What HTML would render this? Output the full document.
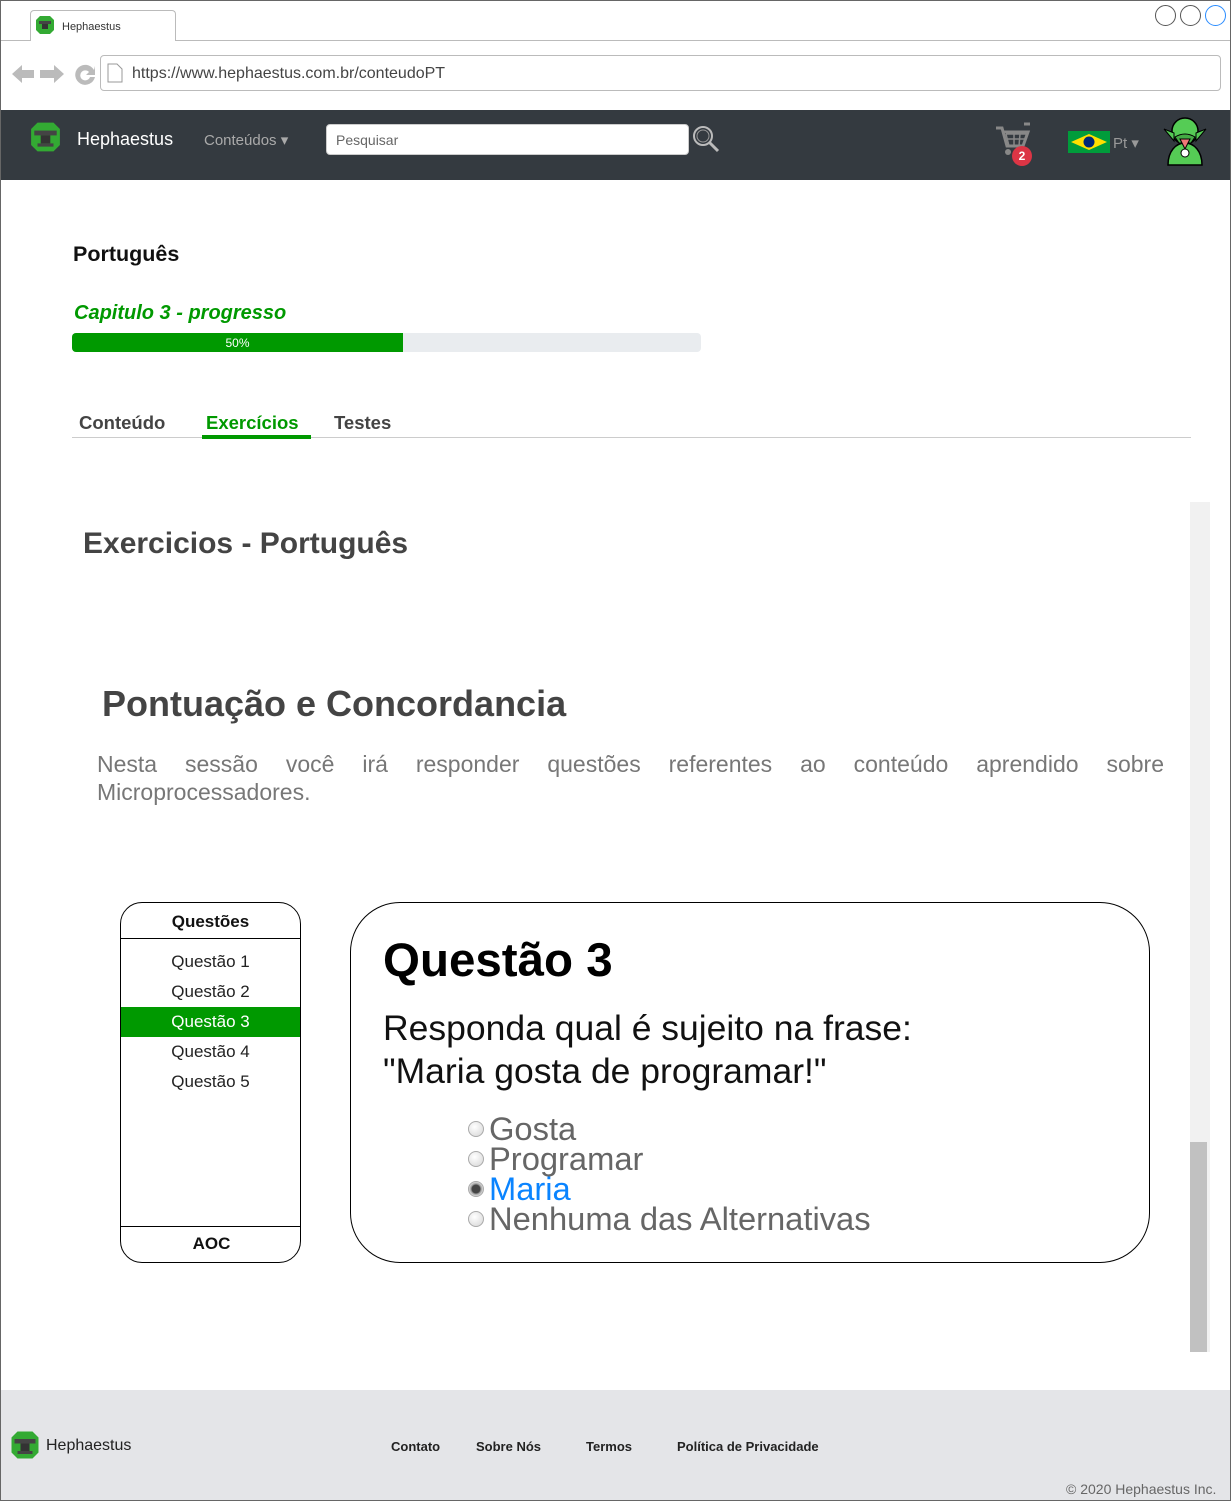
<!DOCTYPE html>
<html><head><meta charset="utf-8"><style>
*{margin:0;padding:0;box-sizing:border-box}
body{width:1231px;height:1501px;position:relative;overflow:hidden;font-family:"Liberation Sans",Arial,sans-serif;background:#fff}
.a{position:absolute;white-space:nowrap}
.frame{position:absolute;left:0;top:0;width:1231px;height:1501px;border:1px solid #666;pointer-events:none;z-index:10}
.rad{position:absolute;width:16px;height:16px;border-radius:50%;border:1px solid #aaa;background:radial-gradient(circle at 40% 35%,#fff,#d5d5d5)}
</style></head><body>
<div class="a" style="left:0;top:40px;width:1231px;height:1px;background:#bbb"></div>
<div class="a" style="left:30px;top:10px;width:146px;height:31px;border:1px solid #bbb;border-bottom:none;border-radius:4px 4px 0 0;background:#fff"></div>
<svg class="a" style="left:35px;top:15px" width="20" height="20" viewBox="0 0 20 20"><path d="M5 1h10l4 4v10l-4 4H5l-4-4V5z" fill="#33aa33"/><rect x="4" y="6" width="12" height="3" fill="#444"/><rect x="7" y="9" width="6" height="5" fill="#333"/></svg>
<div class="a" style="left:62px;top:21px;font-size:11px;color:#333">Hephaestus</div>
<div class="a" style="left:1155px;top:5px;width:21px;height:21px;border:1px solid #555;border-radius:50%"></div>
<div class="a" style="left:1180px;top:5px;width:21px;height:21px;border:1px solid #555;border-radius:50%"></div>
<div class="a" style="left:1205px;top:5px;width:21px;height:21px;border:1px solid #2a8cff;border-radius:50%"></div>
<svg class="a" style="left:10px;top:62px" width="88" height="24" viewBox="0 0 88 24"><path d="M2 12l10-9v5h12v8H12v5z" fill="#bbb"/><path d="M54 12L44 3v5H30v8h14v5z" fill="#bbb"/><path d="M84 8a10 10 0 1 0 1 7h-5a5 5 0 1 1-1-5l-3 3h9V4z" fill="#bbb"/></svg>
<div class="a" style="left:100px;top:55px;width:1121px;height:36px;border:1px solid #bbb;border-radius:4px"></div>
<svg class="a" style="left:106px;top:63px" width="18" height="20"><path d="M2 1h9l5 5v13H2z" fill="none" stroke="#999"/></svg>
<div class="a" style="left:132px;top:65px;font-size:16px;color:#444">https://www.hephaestus.com.br/conteudoPT</div>
<div class="a" style="left:0;top:110px;width:1231px;height:70px;background:#343a40"></div>
<svg class="a" style="left:29px;top:121px" width="33" height="32" viewBox="0 0 20 20"><path d="M5 1h10l4 4v10l-4 4H5l-4-4V5z" fill="#33aa33"/><rect x="3" y="6" width="14" height="3" fill="#444"/><rect x="7" y="9" width="6" height="5" fill="#333"/><rect x="5" y="14" width="10" height="2" fill="#444"/></svg>
<div class="a" style="left:77px;top:129px;font-size:18px;color:#fff">Hephaestus</div>
<div class="a" style="left:204px;top:131px;font-size:15px;color:#aaa">Conteúdos ▾</div>
<div class="a" style="left:326px;top:124px;width:363px;height:31px;background:#fff;border-radius:4px;border:1px solid #ccc"></div>
<div class="a" style="left:336px;top:132px;font-size:14px;color:#666">Pesquisar</div>
<svg class="a" style="left:691px;top:124px" width="30" height="30"><circle cx="12" cy="12" r="9" fill="none" stroke="#bbb" stroke-width="2"/><circle cx="12" cy="12" r="6" fill="none" stroke="#999"/><path d="M18 18l9 9" stroke="#bbb" stroke-width="3"/></svg>
<svg class="a" style="left:994px;top:122px" width="40" height="40" viewBox="0 0 40 40"><path d="M2 6h6l5 18h16l5-14H10" fill="none" stroke="#888" stroke-width="3"/><path d="M12 12h20M13 17h18M12 12l3 12M20 12v12M26 12l-1 12" stroke="#888" stroke-width="1.5"/><circle cx="14" cy="30" r="3" fill="#888"/><path d="M30 2l6 0" stroke="#888" stroke-width="3"/></svg>
<div class="a" style="left:1012px;top:146px;width:20px;height:20px;border-radius:50%;background:#dc3545;color:#fff;font-size:12px;font-weight:bold;text-align:center;line-height:20px">2</div>
<svg class="a" style="left:1068px;top:131px" width="42" height="22"><rect width="42" height="22" fill="#009c3b"/><path d="M21 3L39 11 21 19 3 11z" fill="#ffdf00"/><circle cx="21" cy="11" r="5.5" fill="#002776"/></svg>
<div class="a" style="left:1113px;top:134px;font-size:15px;color:#999">Pt ▾</div>
<svg class="a" style="left:1162px;top:115px" width="46" height="52" viewBox="0 0 46 52"><ellipse cx="23" cy="16" rx="13" ry="13" fill="#5c5" stroke="#000" stroke-width="1.5"/><path d="M2 14l10 4 0 8zM44 14l-10 4 0 8z" fill="#5c5" stroke="#000"/><path d="M6 50c0-14 8-22 17-22s17 8 17 22z" fill="#5c5" stroke="#000" stroke-width="1.5"/><path d="M13 22q10 -6 20 0l-4 6h-12z" fill="#4a4" stroke="#000"/><path d="M18 24l5 10 5-10z" fill="#e77" stroke="#000"/><circle cx="23" cy="38" r="4" fill="#fff" stroke="#000"/></svg>
<div class="a" style="left:73px;top:242px;font-size:21.5px;font-weight:bold;color:#111">Português</div>
<div class="a" style="left:74px;top:302px;font-size:20px;font-weight:bold;font-style:italic;color:#009900">Capitulo 3 - progresso</div>
<div class="a" style="left:72px;top:333px;width:629px;height:19px;background:#e9ecef;border-radius:4px;overflow:hidden"><div style="width:331px;height:19px;background:#009900;color:#fff;font-size:12px;text-align:center;line-height:20px">50%</div></div>
<div class="a" style="left:79px;top:412px;font-size:18.5px;font-weight:bold;color:#444">Conteúdo</div>
<div class="a" style="left:206px;top:412px;font-size:18.5px;font-weight:bold;color:#009900">Exercícios</div>
<div class="a" style="left:334px;top:412px;font-size:18.5px;font-weight:bold;color:#444">Testes</div>
<div class="a" style="left:72px;top:437px;width:1119px;height:1px;background:#ccc"></div>
<div class="a" style="left:202px;top:435px;width:109px;height:4px;background:#009900"></div>
<div class="a" style="left:1190px;top:502px;width:20px;height:850px;background:#f1f1f1"></div>
<div class="a" style="left:1190px;top:1142px;width:17px;height:210px;background:#c1c1c1"></div>
<div class="a" style="left:83px;top:527px;font-size:30px;font-weight:bold;color:#444">Exercicios - Português</div>
<div class="a" style="left:102px;top:683px;font-size:36px;font-weight:bold;color:#444">Pontuação e Concordancia</div>
<div class="a" style="left:97px;top:750px;width:1067px;font-size:23px;color:#777;white-space:normal;text-align:justify;text-align-last:left;line-height:28px">Nesta sessão você irá responder questões referentes ao conteúdo aprendido sobre Microprocessadores.</div>
<div class="a" style="left:120px;top:902px;width:181px;height:361px;border:1px solid #000;border-radius:22px;overflow:hidden">
<div style="height:36px;border-bottom:1px solid #000;text-align:center;font-size:17px;font-weight:bold;line-height:38px;color:#111">Questões</div>
<div style="text-align:center;font-size:17px;color:#222;line-height:30px;padding-top:8px">Questão 1<br>Questão 2<br><div style="background:#009900;color:#fff">Questão 3</div>Questão 4<br>Questão 5</div>
<div style="position:absolute;left:0;top:323px;width:181px;height:36px;border-top:1px solid #000;text-align:center;font-size:17px;font-weight:bold;line-height:34px;color:#111">AOC</div>
</div>
<div class="a" style="left:350px;top:902px;width:800px;height:361px;border:1px solid #000;border-radius:50px"></div>
<div class="a" style="left:383px;top:933px;font-size:47.5px;font-weight:bold;color:#000">Questão 3</div>
<div class="a" style="left:383px;top:1007px;font-size:35.5px;color:#111;line-height:43px">Responda qual é sujeito na frase:<br>"Maria gosta de programar!"</div>
<div class="rad" style="left:468px;top:1121px"></div>
<div class="rad" style="left:468px;top:1151px"></div>
<div class="rad" style="left:468px;top:1181px;background:radial-gradient(circle,#444 0 4px,#999 5px,#ddd 7px)"></div>
<div class="rad" style="left:468px;top:1211px"></div>
<div class="a" style="left:489px;top:1114px;font-size:32.7px;color:#666;line-height:30px">Gosta<br>Programar<br><span style="color:#0a84ff">Maria</span><br>Nenhuma das Alternativas</div>
<div class="a" style="left:0;top:1390px;width:1231px;height:111px;background:#e4e5e8"></div>
<svg class="a" style="left:10px;top:1430px" width="30" height="30" viewBox="0 0 20 20"><path d="M5 1h10l4 4v10l-4 4H5l-4-4V5z" fill="#33aa33"/><rect x="3" y="6" width="14" height="3" fill="#444"/><rect x="7" y="9" width="6" height="5" fill="#333"/><rect x="5" y="14" width="10" height="2" fill="#444"/></svg>
<div class="a" style="left:46px;top:1437px;font-size:16px;color:#222">Hephaestus</div>
<div class="a" style="left:391px;top:1439px;font-size:13px;font-weight:bold;color:#222">Contato</div>
<div class="a" style="left:476px;top:1439px;font-size:13px;font-weight:bold;color:#222">Sobre Nós</div>
<div class="a" style="left:586px;top:1439px;font-size:13px;font-weight:bold;color:#222">Termos</div>
<div class="a" style="left:677px;top:1439px;font-size:13px;font-weight:bold;color:#222">Política de Privacidade</div>
<div class="a" style="left:1066px;top:1481px;font-size:14px;color:#666">© 2020 Hephaestus Inc.</div>
<div class="frame"></div>
</body></html>
